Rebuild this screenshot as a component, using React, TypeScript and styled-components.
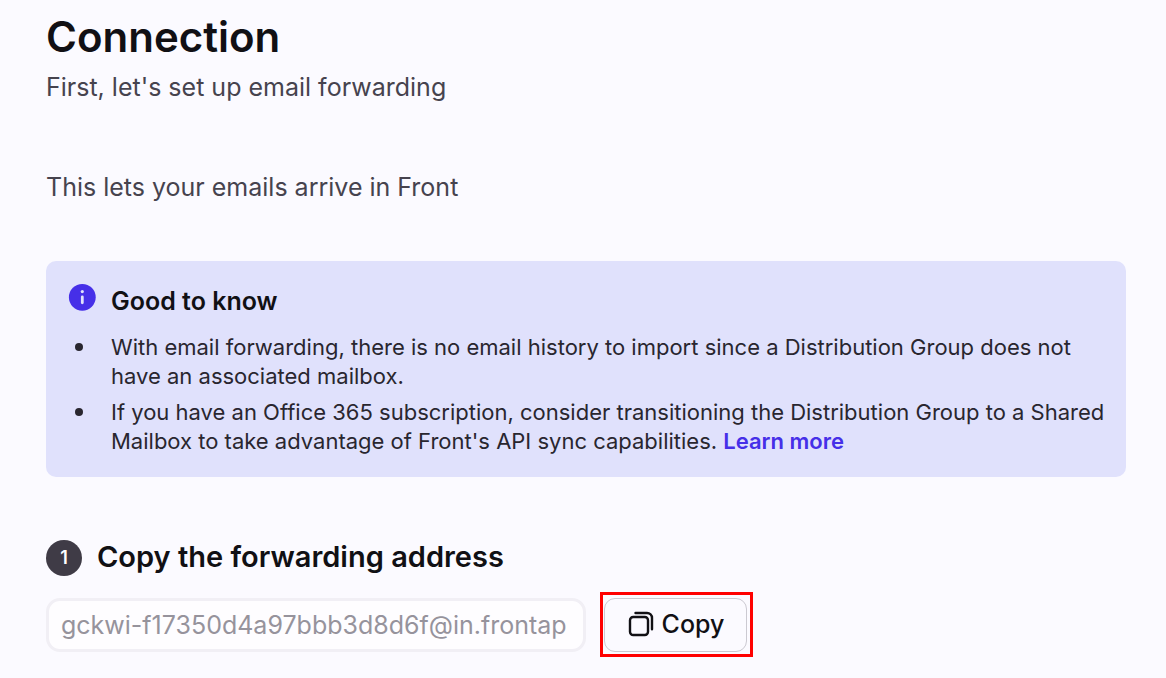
import React from "react";
import styled, { createGlobalStyle } from "styled-components";

const GlobalStyle = createGlobalStyle`
  *, *::before, *::after { box-sizing: border-box; }
  body {
    margin: 0;
    background: #fbfaff;
    color: #111014;
    font-family: Inter, "Liberation Sans", sans-serif;
  }
`;

const Page = styled.main`
  padding: 11px 40px 20px 46px;
`;

const Title = styled.h1`
  margin: 0 0 8px;
  font-size: 42px;
  line-height: 52px;
  font-weight: 600;
`;

const Lead = styled.p<{ $gap: number }>`
  margin: 0 0 ${(p) => p.$gap}px;
  color: #46434e;
  font-size: 25px;
  line-height: 32px;
`;

const Callout = styled.section`
  margin-bottom: 63px;
  padding: 24px 16px 21px 22px;
  border-radius: 10px;
  background: #e0e1fc;
`;

const CalloutHeader = styled.header`
  display: flex;
  align-items: flex-start;
  gap: 15px;
  margin-bottom: 16px;
`;

const InfoIcon = styled.svg`
  flex: none;
  width: 28px;
  height: 28px;
  margin-top: -2px;
`;

const CalloutTitle = styled.h2`
  margin: 0;
  font-size: 25px;
  line-height: 32px;
  font-weight: 600;
`;

const NoteList = styled.ul`
  display: flex;
  flex-direction: column;
  gap: 7px;
  margin: 0;
  padding: 0;
  list-style: none;
`;

const Note = styled.li`
  display: flex;
  gap: 28px;
  color: #29262f;
  font-size: 22px;
  line-height: 29px;

  &::before {
    content: "";
    flex: none;
    width: 8px;
    height: 8px;
    margin: 10px 0 0 7px;
    border-radius: 50%;
    background: #29262f;
  }
`;

const LearnMore = styled.a`
  color: #462fe8;
  font-weight: 600;
  text-decoration: none;
`;

const StepHeader = styled.header`
  display: flex;
  align-items: flex-start;
  gap: 15px;
  margin-bottom: 16px;
`;

const StepNumber = styled.span`
  display: flex;
  align-items: center;
  justify-content: center;
  width: 36px;
  height: 36px;
  border-radius: 50%;
  background: #3f3b46;
  color: #fff;
  font-size: 18px;
  line-height: 24px;
  font-weight: 600;
`;

const StepTitle = styled.h2`
  margin: 0;
  font-size: 29px;
  line-height: 34px;
  font-weight: 600;
`;

const AddressRow = styled.div`
  display: flex;
  align-items: center;
  gap: 14px;
`;

const AddressInput = styled.input`
  width: 540px;
  height: 54px;
  padding: 0 12px;
  border: 3px solid #f1eff5;
  border-radius: 14px;
  background: #fefdff;
  color: #96939c;
  font: 400 25px/32px Inter, "Liberation Sans", sans-serif;
  outline: none;
`;

const Highlight = styled.div`
  padding: 3px 3px 2px 1px;
  border: 3px solid #f00;
`;

const CopyButton = styled.button`
  display: flex;
  align-items: center;
  justify-content: center;
  gap: 8px;
  width: 143px;
  height: 54px;
  padding: 0 0 2px 1px;
  border: 1px solid #cbc9d1;
  border-radius: 11px;
  background: #fbfaff;
  color: #111014;
  font: 500 25px/32px Inter, "Liberation Sans", sans-serif;
`;

export default function App() {
  return (
    <>
      <GlobalStyle />
      <Page>
        <Title>Connection</Title>
        <Lead $gap={68}>First, let's set up email forwarding</Lead>
        <Lead $gap={58}>This lets your emails arrive in Front</Lead>
        <Callout>
          <CalloutHeader>
            <InfoIcon viewBox="0 0 28 28" aria-hidden="true">
              <circle cx="14.3" cy="14.3" r="13.4" fill="#462fe8" />
              <circle cx="14.3" cy="8.6" r="1.6" fill="#e0e1fc" />
              <path d="M14.3 13.8v6" stroke="#e0e1fc" strokeWidth="2.8" strokeLinecap="round" />
            </InfoIcon>
            <CalloutTitle>Good to know</CalloutTitle>
          </CalloutHeader>
          <NoteList>
            <Note>
              <span>
                With email forwarding, there is no email history to import since a Distribution
                Group does not have an associated mailbox.
              </span>
            </Note>
            <Note>
              <span>
                If you have an Office 365 subscription, consider transitioning the Distribution
                Group to a Shared Mailbox to take advantage of Front's API sync capabilities.{" "}
                <LearnMore href="#learn-more">Learn more</LearnMore>
              </span>
            </Note>
          </NoteList>
        </Callout>
        <section>
          <StepHeader>
            <StepNumber>1</StepNumber>
            <StepTitle id="address-title">Copy the forwarding address</StepTitle>
          </StepHeader>
          <AddressRow>
            <AddressInput
              type="text"
              readOnly
              aria-labelledby="address-title"
              value="gckwi-f17350d4a97bbb3d8d6f@in.frontap"
            />
            <Highlight>
              <CopyButton type="button">
                <svg width="26" height="26" viewBox="0 0 26 26" fill="none" stroke="#111014" strokeWidth="2.4" strokeLinecap="round" aria-hidden="true">
                  <rect x="2" y="6" width="18" height="18" rx="3.2" />
                  <path d="M7.5 2H19a5 5 0 0 1 5 5v11.3" />
                </svg>
                Copy
              </CopyButton>
            </Highlight>
          </AddressRow>
        </section>
      </Page>
    </>
  );
}
